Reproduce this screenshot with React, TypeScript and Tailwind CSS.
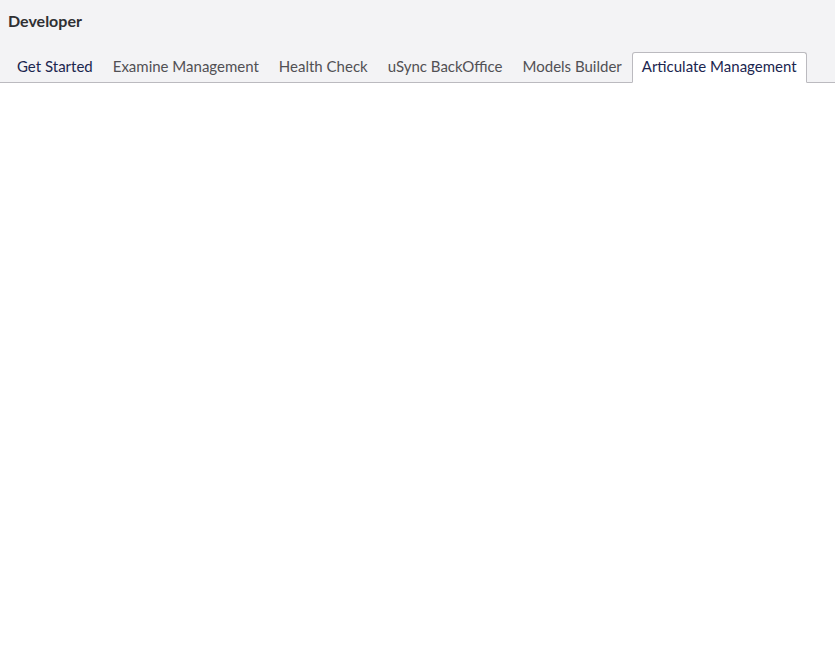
const tabs = [
  { label: 'Get Started', active: false, dark: true },
  { label: 'Examine Management', active: false, dark: false },
  { label: 'Health Check', active: false, dark: false },
  { label: 'uSync BackOffice', active: false, dark: false },
  { label: 'Models Builder', active: false, dark: false },
  { label: 'Articulate Management', active: true, dark: true },
]

export default function App() {
  return (
    <div className="min-h-screen w-full bg-white font-['Lato','Noto_Sans',sans-serif]">
      <header className="border-b border-[#bbbabf] bg-[#f3f3f5]">
        <h1 className="px-2 pt-[11px] text-[16px] font-bold leading-5 text-[#303033]">
          Developer
        </h1>
        <nav className="mt-[21px] flex pl-[7px]">
          {tabs.map((t) => (
            <button
              key={t.label}
              type="button"
              className={`-mb-px h-[31px] rounded-t-[3px] border px-[9px] pb-[3px] text-[15px] leading-5 ${
                t.active
                  ? 'border-[#bbbabf] border-b-white bg-white text-[#1b264f]'
                  : t.dark
                    ? 'border-transparent text-[#1b264f]'
                    : 'border-transparent text-[#515054]'
              }`}
            >
              {t.label}
            </button>
          ))}
        </nav>
      </header>
    </div>
  )
}
